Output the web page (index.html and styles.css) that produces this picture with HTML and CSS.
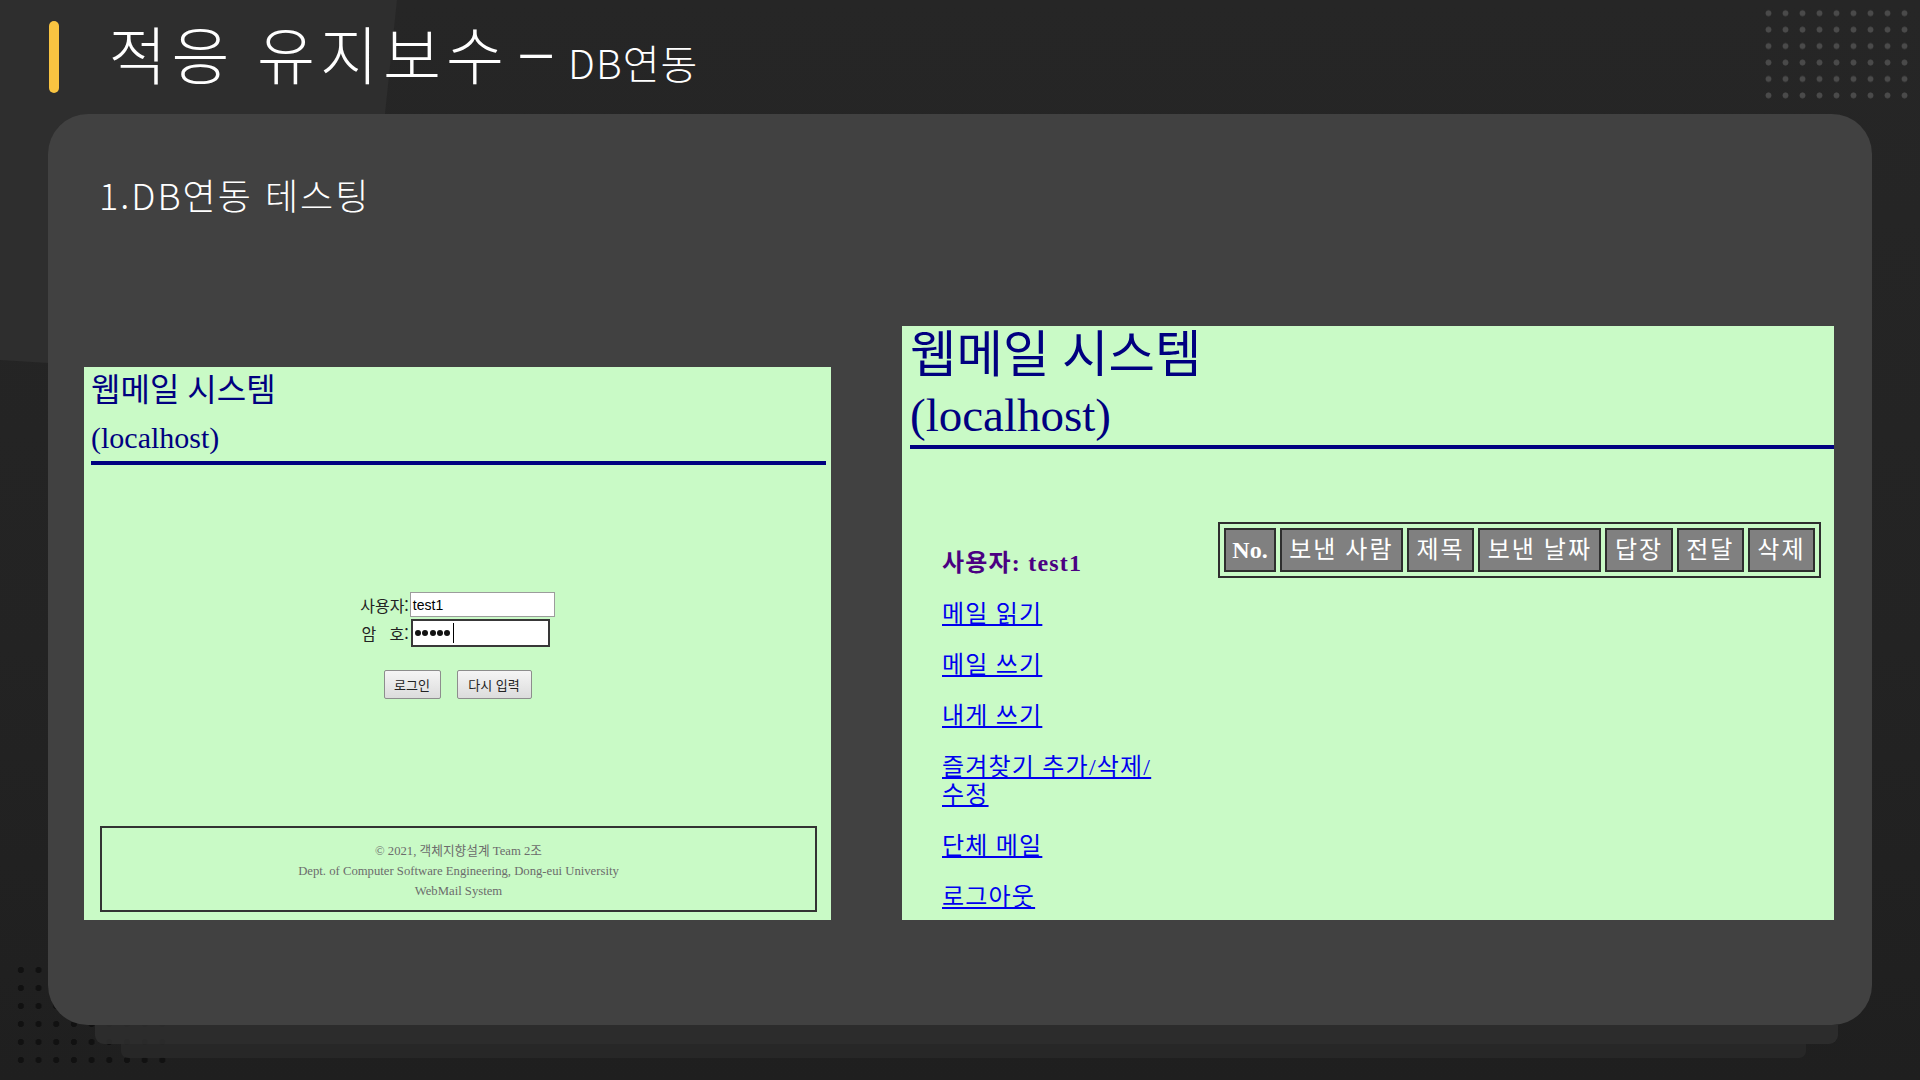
FILE: index.html
```html
<!DOCTYPE html>
<html lang="ko">
<head>
<meta charset="utf-8">
<title>적응 유지보수 – DB연동</title>
<link rel="stylesheet" href="styles.css">
</head>
<body>
<div class="bg-shape"></div>
<div class="dots dots-top"></div>
<div class="dots dots-bottom"></div>

<header class="slide-header">
  <span class="accent-bar"></span>
  <h1 class="slide-title"><span class="main">적응 유지보수</span><span class="dash">–</span><span class="sub">DB연동</span></h1>
</header>

<main class="card">
  <h2 class="card-title">1.DB연동 테스팅</h2>
  <div class="shots">
    <section class="shot shot-login">
      <h1 class="wm-title"><span class="ko">웹메일 시스템</span><br>(localhost)</h1>
      <div class="wm-rule"></div>
      <form class="login">
        <div class="login-grid">
          <label>사용자:</label>
          <div class="field field-user">test1</div>
          <label>암&nbsp;&nbsp;&nbsp;호:</label>
          <div class="field field-pass"><span class="pw-dot"></span><span class="pw-dot"></span><span class="pw-dot"></span><span class="pw-dot"></span><span class="pw-dot"></span><span class="caret"></span></div>
        </div>
        <div class="login-buttons">
          <button type="button" class="btn btn-login">로그인</button>
          <button type="button" class="btn btn-reset">다시 입력</button>
        </div>
      </form>
      <footer class="wm-footer">© 2021, 객체지향설계 Team 2조<br>Dept. of Computer Software Engineering, Dong-eui University<br>WebMail System</footer>
    </section>

    <section class="shot shot-main">
      <h1 class="wm-title"><span class="ko">웹메일 시스템</span><br>(localhost)</h1>
      <div class="wm-rule"></div>
      <div class="wm-body">
        <nav class="menu">
          <p class="user">사용자: test1</p>
          <p><a href="#">메일 읽기</a></p>
          <p><a href="#">메일 쓰기</a></p>
          <p><a href="#">내게 쓰기</a></p>
          <p><a href="#">즐겨찾기 추가/삭제/수정</a></p>
          <p><a href="#">단체 메일</a></p>
          <p><a href="#">로그아웃</a></p>
        </nav>
        <table class="mailbox">
          <tr>
            <th class="no">No.</th>
            <th>보낸 사람</th>
            <th>제목</th>
            <th>보낸 날짜</th>
            <th>답장</th>
            <th>전달</th>
            <th>삭제</th>
          </tr>
        </table>
      </div>
    </section>
  </div>
</main>
<div class="stack stack-1"></div>
<div class="stack stack-2"></div>
</body>
</html>
```

FILE: styles.css
```css
html, body {
  margin: 0;
  padding: 0;
}

body {
  width: 1920px;
  height: 1080px;
  overflow: hidden;
  position: relative;
  background: linear-gradient(#262626, #232323 60%, #1f1f1f);
  font-family: "Noto Sans CJK KR", sans-serif;
}

/* decorative background pieces */
.bg-shape {
  position: absolute;
  left: 0;
  top: 0;
  width: 400px;
  height: 370px;
  background: #2e2e2e;
  clip-path: polygon(0 0, 397px 0, 385px 114px, 330px 330px, 48px 363px, 0 360px);
  z-index: -2;
}

.dots {
  position: absolute;
  z-index: -1;
}

.dots-top {
  left: 1760px;
  top: 5px;
  width: 153px;
  height: 99px;
  background-image: radial-gradient(circle, #4a4a4a 2.6px, rgba(74, 74, 74, 0) 3.3px);
  background-size: 17px 16.45px;
}

.dots-bottom {
  left: 12px;
  top: 961px;
  width: 160px;
  height: 108px;
  background-image: radial-gradient(circle, #111 2.8px, rgba(17, 17, 17, 0) 3.5px);
  background-size: 17.7px 18px;
}

/* slide header */
.slide-header {
  height: 114px;
  box-sizing: border-box;
  padding: 21px 0 0 49px;
  display: flex;
  align-items: flex-start;
}

.accent-bar {
  flex: none;
  width: 10px;
  height: 72px;
  border-radius: 5px;
  background: #f9c441;
}

.slide-title {
  margin: 0 0 0 49.5px;
  font-size: 63px;
  line-height: 62px;
  font-weight: 300;
  letter-spacing: 5px;
  color: #fff;
  white-space: nowrap;
}

.slide-title .dash {
  margin-left: 8px;
  font-size: 71px;
  line-height: 62px;
  letter-spacing: 0;
  vertical-align: -4px;
}

.slide-title .sub {
  margin-left: 13px;
  font-size: 40px;
  line-height: 40px;
  letter-spacing: 1px;
}

/* main card */
.card {
  margin-left: 48px;
  width: 1824px;
  height: 911px;
  box-sizing: border-box;
  padding-top: 56px;
  background: #414141;
  border-radius: 40px;
}

.card-title {
  margin: 0 0 0 51px;
  font-size: 36px;
  line-height: 48px;
  font-weight: 300;
  letter-spacing: 2px;
  color: #fff;
}

.shots {
  display: flex;
  align-items: flex-end;
  gap: 71px;
  margin-top: 108px;
  padding-left: 36px;
}

.shot {
  flex: none;
  overflow: hidden;
  background: #c9fac6;
}

.shot-login {
  width: 747px;
  height: 553px;
}

.shot-main {
  width: 932px;
  height: 594px;
}

.wm-title {
  margin: 0;
  font-family: "Liberation Serif", "Noto Sans CJK KR", serif;
  font-weight: normal;
  color: #000080;
  white-space: nowrap;
}

.shot-login .wm-title {
  font-size: 30px;
  line-height: 47px;
  padding-left: 7px;
}

.shot-login .wm-title .ko {
  font-size: 32px;
}

.shot-main .wm-title {
  font-size: 47px;
  line-height: 59px;
  padding-left: 8px;
}

.shot-main .wm-title .ko {
  font-size: 50.5px;
}

.wm-rule {
  height: 4px;
  background: #000080;
}

.shot-login .wm-rule {
  margin: 0 5px 0 7px;
}

.shot-main .wm-rule {
  margin-left: 8px;
}

/* login form */
.login {
  margin: 127px 0 0;
}

.login-grid {
  display: grid;
  grid-template-columns: auto auto;
  justify-content: center;
  align-items: center;
  row-gap: 2px;
  column-gap: 1px;
}

.login-grid label {
  font-family: "Noto Sans CJK KR", sans-serif;
  font-size: 16px;
  line-height: 20px;
  color: #222;
  text-align: right;
}

.field {
  box-sizing: border-box;
  display: flex;
  align-items: center;
  padding-left: 2px;
  background: #fff;
  font-family: "Liberation Sans", sans-serif;
  font-size: 14px;
  color: #000;
}

.field-user {
  width: 145px;
  height: 25px;
  border: 1px solid #9c9c9c;
}

.field-pass {
  width: 139px;
  height: 28px;
  margin-left: 1px;
  border: 2px solid #383838;
}

.pw-dot {
  width: 6px;
  height: 6px;
  margin-right: 1.4px;
  border-radius: 50%;
  background: #111;
}

.caret {
  width: 1px;
  height: 20px;
  margin-left: 1px;
  background: #000;
}

.login-buttons {
  display: flex;
  justify-content: center;
  gap: 16px;
  margin-top: 23px;
}

.btn {
  height: 29px;
  box-sizing: border-box;
  padding: 0;
  font-family: "Noto Sans CJK KR", sans-serif;
  font-size: 13px;
  color: #222;
  background: linear-gradient(#f5f5f5, #dcdcdc);
  border: 1px solid #8d8d8d;
  border-radius: 2px;
}

.btn-login {
  width: 57px;
}

.btn-reset {
  width: 75px;
}

.wm-footer {
  margin: 127px 14px 0 16px;
  padding: 13px 0 9px;
  border: 2px solid #333;
  text-align: center;
  font-family: "Liberation Serif", "Noto Sans CJK KR", serif;
  font-size: 12.7px;
  line-height: 20px;
  color: #6c6c6c;
}

/* main mail page */
.wm-body {
  display: flex;
  align-items: flex-start;
  margin-top: 73px;
}

.menu {
  flex: none;
  width: 230px;
  padding-left: 40px;
  margin-top: 27px;
  font-family: "Liberation Serif", "Noto Sans CJK KR", serif;
  font-size: 24px;
  line-height: 28px;
  letter-spacing: 1.2px;
}

.menu p {
  margin: 0 0 23px;
}

.menu .user {
  font-weight: bold;
  color: #4b0082;
}

.menu a {
  color: #0000ee;
  text-decoration: underline;
}

.mailbox {
  margin-left: auto;
  margin-right: 13px;
  border: 2px solid #2e2e2e;
  border-spacing: 4px;
}

.mailbox th {
  padding: 6px 7.5px;
  background: #808080;
  border: 2px solid #2e2e2e;
  color: #fff;
  font-family: "Liberation Serif", "Noto Sans CJK KR", serif;
  font-size: 24px;
  line-height: 28px;
  font-weight: normal;
  letter-spacing: 2px;
  white-space: nowrap;
}

.mailbox th.no {
  padding: 6px 6px;
  font-weight: bold;
  letter-spacing: 0;
}

/* stacked sheets under the card */
.stack-1 {
  margin-left: 95px;
  width: 1743px;
  height: 19px;
  background: rgba(47, 47, 47, 0.85);
  border-radius: 0 0 9px 9px;
}

.stack-2 {
  margin-left: 121px;
  width: 1685px;
  height: 14px;
  background: rgba(41, 41, 41, 0.85);
  border-radius: 0 0 7px 7px;
}
```
